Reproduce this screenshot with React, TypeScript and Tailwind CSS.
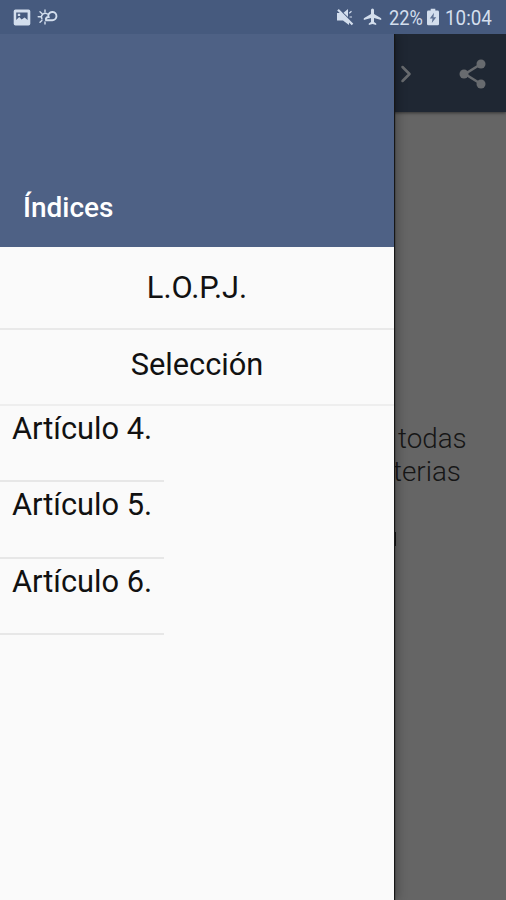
import { ChevronRight } from 'lucide-react';

const articles = ['Artículo 4.', 'Artículo 5.', 'Artículo 6.'];

function StatusBar() {
  return (
    <header className="relative z-20 h-[34px] shrink-0 bg-[#465a7e] flex items-center text-[#d3deed]">
      <svg className="ml-[13px] w-[18px] h-[17px]" viewBox="0 0 18 17" fill="currentColor">
        <path fillRule="evenodd" d="M2.500 0.500h13a1.800 1.800 0 0 1 1.800 1.800v12.400a1.800 1.800 0 0 1-1.800 1.800h-13a1.800 1.800 0 0 1-1.800-1.800V2.300a1.800 1.800 0 0 1 1.800-1.800zM3.200 3.500v7.500l3-3 2.400 2.600 3-2.200 3 2.600V3.500zM4.800 4.800h2.400v2.200H4.800z" />
      </svg>
      <svg className="ml-[6px] w-[22px] h-[18px]" viewBox="0 0 22 18" fill="none" stroke="currentColor" strokeWidth="1.400" strokeLinecap="round">
        <path d="M10.500 6A3.800 3.800 0 0 0 5 11M1.200 8.800h2.300M3 3.800l1.900 1.700M8 2v2M3 14.200l1.900-1.700M8 16v-2" />
        <path d="M9 12.200h6.300a4.100 4.100 0 1 0-4-4.700M9 12.200a2.300 2.300 0 0 1 2.900-3" strokeWidth="1.900" />
      </svg>

      <div className="ml-auto flex items-center">
        <svg className="w-[18px] h-[18px]" viewBox="0 0 18 18" fill="currentColor">
          <path d="M1 5h4l8 8v4l-6-4.500H1zM12 1v8L7.500 4.800z" />
          <path d="M2 1.800l14.500 14.700" stroke="currentColor" strokeWidth="2.200" />
          <path d="M13.200 5.200l2.300-2M13.500 9h2.500" stroke="currentColor" strokeWidth="1.200" />
        </svg>
        <svg className="ml-[9px] w-[19px] h-[18px]" viewBox="0 0 19 18" fill="currentColor">
          <path d="M18.200 12v-1.800L11 6V2a1.500 1.500 0 0 0-3 0v4L.8 10.200V12L8 9.900v4.200l-2.200 1.500V17l3.700-1 3.700 1v-1.400L11 14.100V9.900z" />
        </svg>
        <span className="ml-[7px] w-[35px] pt-px text-[20px] leading-none">
          <span className="inline-block origin-left scale-x-[0.91]">22%</span>
        </span>
        <svg className="ml-[3px] w-[12px] h-[18px]" viewBox="0 0 13 18" fill="currentColor">
          <path d="M4 0h5v2h2.500A1.500 1.500 0 0 1 13 3.500v13a1.500 1.500 0 0 1-1.500 1.500h-10A1.500 1.500 0 0 1 0 16.500v-13A1.500 1.500 0 0 1 1.500 2H4z" />
          <path d="M7.600 4.500L3 10.500h3l-.8 5L10 9.200H7z" fill="#5f7294" />
        </svg>
        <span className="ml-[6px] w-[61px] pt-px text-[20px] leading-none">
          <span className="inline-block origin-left scale-x-[0.94]">10:04</span>
        </span>
      </div>
    </header>
  );
}

function ShareIcon() {
  return (
    <svg className="w-[28px] h-[30px]" viewBox="0 0 28 30" fill="#686b6f">
      <path d="M22 5L6 15l16 10" fill="none" stroke="#686b6f" strokeWidth="2.500" />
      <circle cx="22" cy="5" r="4.500" />
      <circle cx="5" cy="15" r="4.500" />
      <circle cx="22" cy="25" r="4.500" />
    </svg>
  );
}

function Drawer() {
  return (
    <aside className="absolute left-0 top-[34px] bottom-0 z-10 w-[394px] bg-[#fafafa] text-[#111] shadow-[1px_0_1px_#161616,3px_0_10px_rgba(0,0,0,0.3)]">
      <div className="h-[213px] bg-[#4e6185] flex items-end pl-[23px] pb-[22px]">
        <h1 className="text-[28px] leading-[34px] font-medium text-white">Índices</h1>
      </div>
      <nav className="text-[30.800px] leading-[36px]">
        <div className="h-[83px] border-b-2 border-[#e9e9e9] pt-[23px] text-center">L.O.P.J.</div>
        <div className="h-[76px] border-b-2 border-[#eeeeee] pt-[17px] text-center">Selección</div>
        <ul className="w-[164px]">
          {articles.map((article) => (
            <li key={article} className="h-[76.400px] border-b-2 border-[#e7e7e7] pl-[12px] pt-[5px] whitespace-nowrap">
              {article}
            </li>
          ))}
        </ul>
      </nav>
    </aside>
  );
}

export default function App() {
  return (
    <div className="relative w-full h-screen overflow-hidden flex flex-col bg-[#656565] font-['Roboto',sans-serif]">
      <StatusBar />

      {/* Page dimmed behind the open drawer */}
      <div className="h-[78px] shrink-0 bg-[#1f2733] flex items-center justify-end pr-[19px] pt-px shadow-[0_1px_3px_rgba(0,0,0,0.5)]">
        <ChevronRight className="w-[28px] h-[28px] mr-[39px] text-[#686b6f]" strokeWidth={2.2} />
        <ShareIcon />
      </div>
      <main className="pl-[398px] pt-[310px] text-[27.800px] leading-[33px] font-light text-[#161616]">
        <p>todas</p>
        <p className="-ml-[5px]">terias</p>
        <div className="-ml-[4px] mt-[44px] w-[2px] h-[14px] bg-[#161616]" />
      </main>

      <Drawer />
    </div>
  );
}
